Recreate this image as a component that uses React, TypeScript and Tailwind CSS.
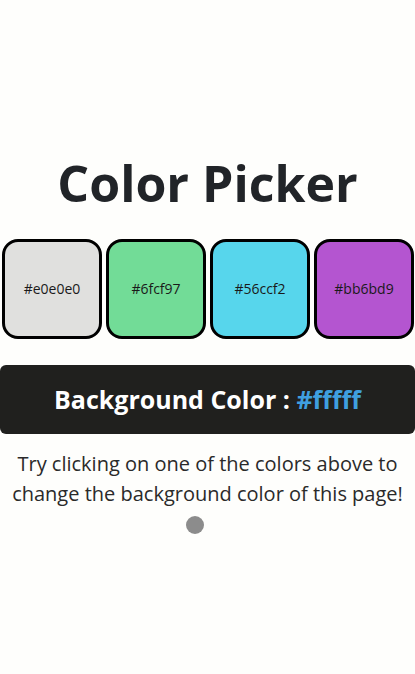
import { useState } from "react";

const colors = [
  { hex: "#e0e0e0", fill: "#e0e0de" },
  { hex: "#6fcf97", fill: "#72dc97" },
  { hex: "#56ccf2", fill: "#57d6ec" },
  { hex: "#bb6bd9", fill: "#b455d0" },
];

export default function App() {
  const [bg, setBg] = useState("#fffff");

  return (
    <div
      className="min-h-screen bg-[#fefefc] flex flex-col items-center pt-[158px]"
      style={{ fontFamily: "'Open Sans', sans-serif" }}
    >
      <h1 className="text-[50px] font-bold text-[#212428] leading-none mb-[31px]">Color Picker</h1>

      <div className="flex gap-1 w-full justify-center pl-[1px]">
        {colors.map((c) => (
          <button
            key={c.hex}
            onClick={() => setBg(c.hex)}
            className="w-[100px] h-[100px] rounded-[16px] border-[3px] border-black flex items-center justify-center text-sm text-[#1a1a1a]"
            style={{ backgroundColor: c.fill }}
          >
            {c.hex}
          </button>
        ))}
      </div>

      <div className="w-full mt-[26px] h-[69px] rounded-md bg-[#20201e] flex items-center justify-center">
        <span className="text-white text-[25px] font-bold">
          Background Color : <span className="text-[#3f9fdf]">{bg}</span>
        </span>
      </div>

      <p className="text-center text-xl leading-[30px] text-[#2a2a2a] mt-[15px]">
        Try clicking on one of the colors above to change the background color of this page!
      </p>
      <div className="w-[18px] h-[18px] rounded-full bg-[#8c8c8c] mt-[7px] mr-[26px]" />
    </div>
  );
}
